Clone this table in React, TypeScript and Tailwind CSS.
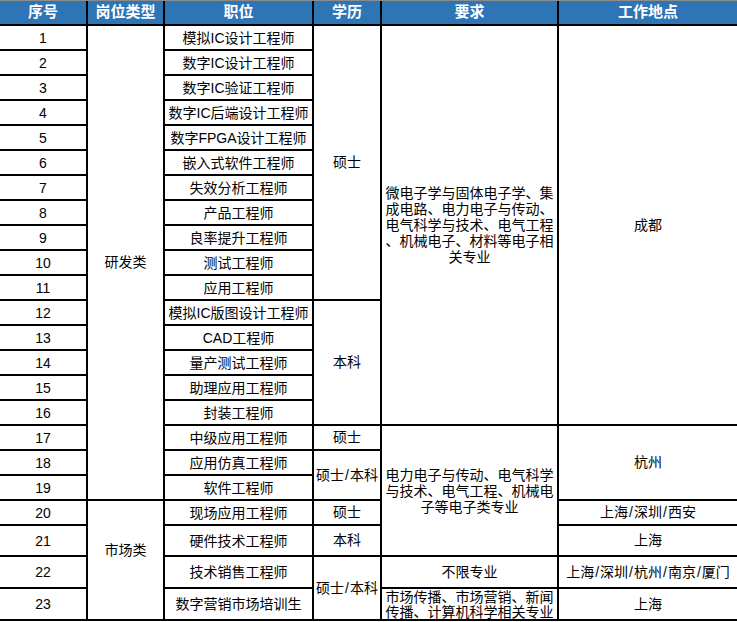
import { Fragment } from 'react'

const positions = [
  '模拟IC设计工程师',
  '数字IC设计工程师',
  '数字IC验证工程师',
  '数字IC后端设计工程师',
  '数字FPGA设计工程师',
  '嵌入式软件工程师',
  '失效分析工程师',
  '产品工程师',
  '良率提升工程师',
  '测试工程师',
  '应用工程师',
  '模拟IC版图设计工程师',
  'CAD工程师',
  '量产测试工程师',
  '助理应用工程师',
  '封装工程师',
  '中级应用工程师',
  '应用仿真工程师',
  '软件工程师',
  '现场应用工程师',
  '硬件技术工程师',
  '技术销售工程师',
  '数字营销市场培训生',
]

const cell = 'flex items-center justify-center bg-white text-center whitespace-nowrap overflow-hidden'

function Head({ children }: { children: React.ReactNode }) {
  return <div className="flex items-center justify-center bg-[#2e75b6] text-[15px] font-bold text-white">{children}</div>
}

function Num({ n }: { n: number }) {
  return <div className={`${cell} pt-px font-['Liberation_Sans',sans-serif] text-[14px]`}>{n}</div>
}

function Pos({ n }: { n: number }) {
  return <div className={`${cell} pt-px`}>{positions[n - 1]}</div>
}

// slashes sit a bit wider in the source sheet
function Slashed({ text }: { text: string }) {
  const parts = text.split('/')
  return (
    <span>
      {parts.map((p, i) => (
        <Fragment key={i}>
          {i > 0 && <span className="px-px">/</span>}
          {p}
        </Fragment>
      ))}
    </span>
  )
}

export default function App() {
  return (
    <div className="w-[737px] bg-white font-['Liberation_Sans','Noto_Sans_CJK_SC',sans-serif] text-[14px] text-black">
      <div className="h-px bg-[#8c8c8c]" />
      <div className="grid grid-cols-[86px_75px_147px_66px_175px_178px] grid-rows-[23px_repeat(20,23px)_29px_30px_30px] gap-[2px] bg-black pb-[2px]">
        <Head>序号</Head>
        <Head>岗位类型</Head>
        <Head>职位</Head>
        <Head>学历</Head>
        <Head>要求</Head>
        <Head>工作地点</Head>

        <Num n={1} />
        <div className={`${cell} row-span-19`}>研发类</div>
        <Pos n={1} />
        <div className={`${cell} row-span-11`}>硕士</div>
        <div className={`${cell} row-span-16 leading-[16px]`}>
          <div>
            微电子学与固体电子学、集<br />
            成电路、电力电子与传动、<br />
            电气科学与技术、电气工程<br />
            、机械电子、材料等电子相<br />
            关专业
          </div>
        </div>
        <div className={`${cell} row-span-16`}>成都</div>

        {[2, 3, 4, 5, 6, 7, 8, 9, 10, 11].map(n => (
          <Fragment key={n}>
            <Num n={n} />
            <Pos n={n} />
          </Fragment>
        ))}

        <Num n={12} />
        <Pos n={12} />
        <div className={`${cell} row-span-5`}>本科</div>

        {[13, 14, 15, 16].map(n => (
          <Fragment key={n}>
            <Num n={n} />
            <Pos n={n} />
          </Fragment>
        ))}

        <Num n={17} />
        <Pos n={17} />
        <div className={cell}>硕士</div>
        <div className={`${cell} row-span-5 leading-[16px]`}>
          <div>
            电力电子与传动、电气科学<br />
            与技术、电气工程、机械电<br />
            子等电子类专业
          </div>
        </div>
        <div className={`${cell} row-span-3`}>杭州</div>

        <Num n={18} />
        <Pos n={18} />
        <div className={`${cell} row-span-2`}><Slashed text="硕士/本科" /></div>

        <Num n={19} />
        <Pos n={19} />

        <Num n={20} />
        <div className={`${cell} row-span-4 pb-5`}>市场类</div>
        <Pos n={20} />
        <div className={cell}>硕士</div>
        <div className={cell}><Slashed text="上海/深圳/西安" /></div>

        <Num n={21} />
        <Pos n={21} />
        <div className={cell}>本科</div>
        <div className={cell}>上海</div>

        <Num n={22} />
        <Pos n={22} />
        <div className={`${cell} row-span-2`}><Slashed text="硕士/本科" /></div>
        <div className={cell}>不限专业</div>
        <div className={cell}><Slashed text="上海/深圳/杭州/南京/厦门" /></div>

        <Num n={23} />
        <Pos n={23} />
        <div className="overflow-hidden whitespace-nowrap bg-white pt-px text-center leading-[15px]">
          市场传播、市场营销、新闻<br />
          传播、计算机科学相关专业
        </div>
        <div className={cell}>上海</div>
      </div>
    </div>
  )
}
